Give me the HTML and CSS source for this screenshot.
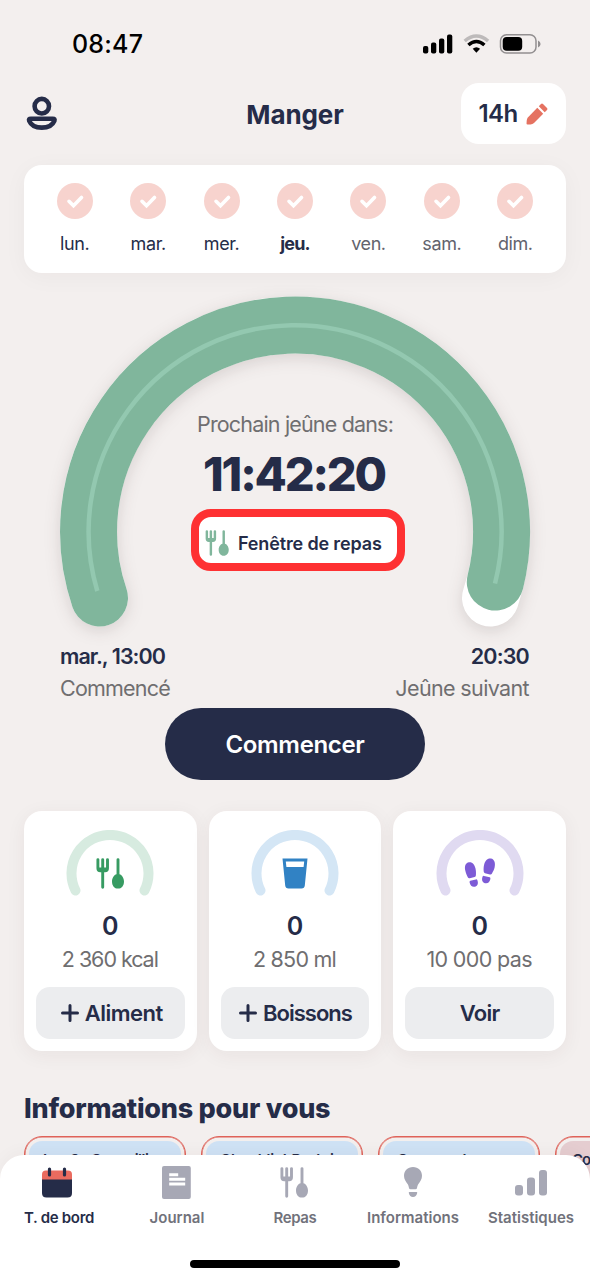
FILE: index.html
```
<!DOCTYPE html>
<html lang="fr">
<head>
<meta charset="utf-8">
<title>Manger</title>
<link rel="stylesheet" href="styles.css">
</head>
<body>
<svg class="defs" width="0" height="0" aria-hidden="true">
  <symbol id="cutlery" viewBox="0 0 28 31">
    <path d="M1.900 1.600v8.600q0 2.600 2.400 2.600h4.800q2.400 0 2.400-2.600V1.600M6.700 1.600v27.600M22 1.600v18" fill="none" stroke="currentColor" stroke-width="2.900" stroke-linecap="round" stroke-linejoin="round"/>
    <path d="M1.900 9.500h9.600v1.500q0 2-2 2H3.900q-2 0-2-2z" fill="currentColor"/>
    <path d="M22 16c3.400 0 6 3.600 6 7.400 0 4.200-2.400 7.200-6 7.200s-6-3-6-7.200c0-3.800 2.600-7.400 6-7.400z" fill="currentColor"/>
  </symbol>
  <symbol id="check" viewBox="0 0 36 36">
    <circle cx="18" cy="18" r="18" fill="#f7d3ce"/>
    <path d="M12 18.300l4.500 4.500 8-8.300" fill="none" stroke="#fff" stroke-width="3.600" stroke-linecap="round"/>
  </symbol>
  <symbol id="gauge" viewBox="0 0 88 66">
    <path d="M9.500 60.500A38.500 38.500 0 1 1 78.500 60.500" fill="none" stroke="currentColor" stroke-width="10" stroke-linecap="round"/>
  </symbol>
  <symbol id="plus" viewBox="0 0 18 18">
    <path d="M9 1.500v15M1.500 9h15" stroke="currentColor" stroke-width="3" stroke-linecap="round"/>
  </symbol>
</svg>

<div class="screen">
  <div class="status">
    <span class="clock">08:47</span>
    <svg class="status-icons" width="120" height="22" viewBox="0 0 120 22">
      <rect x="1" y="13" width="5.300" height="7.500" rx="1.900"/>
      <rect x="9" y="9.500" width="5.300" height="11" rx="1.900"/>
      <rect x="17" y="5.500" width="5.300" height="15" rx="1.900"/>
      <rect x="25" y="1.500" width="5.300" height="19" rx="1.900"/>
      <g fill="none" stroke-width="3.500">
        <path d="M42.700 8q11.700-10 23.400 0" stroke="#bdbaba"/>
        <path d="M46.400 12q8-7 16 0" stroke="#000"/>
      </g>
      <path d="M50.700 15.700q3.700-3 7.400 0l-3.700 4z"/>
      <rect x="78.500" y="1.700" width="35.500" height="18.300" rx="6" fill="none" stroke="#928f90" stroke-width="1.500"/>
      <rect x="80.700" y="4" width="19.500" height="13.700" rx="4"/>
      <path d="M116 7.500q2.600 1.200 2.600 3.500t-2.600 3.500z" fill="#928f90"/>
    </svg>
  </div>

  <header class="header">
    <svg class="profile" width="34" height="36" viewBox="0 0 34 36" fill="none" stroke="#252c48" stroke-width="4.600">
      <ellipse cx="16.800" cy="10.200" rx="7.200" ry="7.300"/>
      <path d="M5.800 22.800h22q2.400 0 1.600 2c-1.800 4.300-6.600 6.800-12.600 6.800S6 29.100 4.200 24.800q-.8-2 1.600-2z"/>
    </svg>
    <h1 class="title">Manger</h1>
    <div class="plan">
      <span class="plan-text">14h</span>
      <svg width="22" height="22" viewBox="0 0 22 22" fill="#e57261">
        <path d="M11.300 4.800l5.900 5.900L8 20q-1.500 1.300-3.500 1.400L1.500 21.500q-1 0-1-1l.3-3.500q.2-1.600 1.300-2.800z"/>
        <path d="M12.800 3.300L15 1.100q1-1 2 0l4 4q1 1 0 2l-2.300 2.200z"/>
      </svg>
    </div>
  </header>

  <section class="week">
    <div class="day"><svg class="check"><use href="#check"/></svg><span>lun.</span></div>
    <div class="day"><svg class="check"><use href="#check"/></svg><span>mar.</span></div>
    <div class="day"><svg class="check"><use href="#check"/></svg><span>mer.</span></div>
    <div class="day today"><svg class="check"><use href="#check"/></svg><span>jeu.</span></div>
    <div class="day next"><svg class="check"><use href="#check"/></svg><span>ven.</span></div>
    <div class="day next"><svg class="check"><use href="#check"/></svg><span>sam.</span></div>
    <div class="day next"><svg class="check"><use href="#check"/></svg><span>dim.</span></div>
  </section>

  <section class="dial">
    <svg class="ring" width="590" height="372" viewBox="0 273 590 372" fill="none">
      <g class="ring-shadow" stroke-width="57" stroke-linecap="round">
        <path d="M99.500 598A206.500 206.500 0 1 1 490.500 598" stroke="#fff"/>
      </g>
      <path d="M99.500 598A206.500 206.500 0 1 1 495.300 582" stroke="#80b69c" stroke-width="57" stroke-linecap="round"/>
      <path d="M97.300 591A206.500 206.500 0 1 1 495 583.500" stroke="#93c8b0" stroke-width="4.500"/>
    </svg>
    <div class="dial-body">
      <p class="until">Prochain jeûne dans:</p>
      <p class="timer">11:42:20</p>
      <div class="window"><svg class="window-icon"><use href="#cutlery"/></svg><span>Fenêtre de repas</span></div>
    </div>
  </section>

  <section class="times">
    <div><p class="time t-start">mar., 13:00</p><p class="time-label l-start">Commencé</p></div>
    <div class="end"><p class="time t-end">20:30</p><p class="time-label l-end">Jeûne suivant</p></div>
  </section>
  <button class="start"><span>Commencer</span></button>

  <section class="cards">
    <article class="card">
      <div class="meter green"><svg class="gauge"><use href="#gauge"/></svg><svg class="meter-icon food"><use href="#cutlery"/></svg></div>
      <p class="value">0</p><p class="goal g1">2 360 kcal</p>
      <button class="action a1"><svg class="plus"><use href="#plus"/></svg><span>Aliment</span></button>
    </article>
    <article class="card">
      <div class="meter blue"><svg class="gauge"><use href="#gauge"/></svg>
        <svg class="meter-icon glass" viewBox="0 0 26 31"><path fill-rule="evenodd" d="M.5.5h25L22.800 27.500q-.3 3-3.300 3h-13q-3 0-3.300-3zM3.800 3.500l.6 5.500h17.200l.6-5.500z" fill="#3182c4"/></svg></div>
      <p class="value">0</p><p class="goal g2">2 850 ml</p>
      <button class="action a2"><svg class="plus"><use href="#plus"/></svg><span>Boissons</span></button>
    </article>
    <article class="card">
      <div class="meter purple"><svg class="gauge"><use href="#gauge"/></svg>
        <svg class="meter-icon steps" viewBox="0 0 32 30" fill="#7d5bd6">
          <path d="M1.400 13C.2 8.500 1.500 4.800 5 4.300c3.500-.4 5.600 2.300 6.500 6.300.5 2.500.6 4.400.4 6.600q-.1 1.400-1.300 1.800l-4.800 1.200q-1.400.3-2-1C2.700 17.200 2 15.500 1.400 13z"/>
          <path d="M6.300 22.800l5.600-1.400q1-.2 1.400.7c1.300 3.200.5 5.900-2.200 6.600-2.800.7-4.800-.9-5.500-4.100q-.2-1.500.7-1.800z"/>
          <path d="M30.600 9.500c1.100-4.500-.3-8.400-3.700-9-3.500-.5-5.900 2.300-6.800 6.300-.6 2.500-.6 4.400-.4 6.700q.1 1.300 1.300 1.700l5 1.300q1.400.3 2-1c1-2 2-3.500 2.600-6z"/>
          <path d="M25.700 19.300L20 17.900q-1-.2-1.400.7c-1.200 3.200-.4 5.900 2.300 6.600 2.800.7 4.800-.9 5.500-4.100q.2-1.500-.7-1.800z"/>
        </svg></div>
      <p class="value">0</p><p class="goal g3">10 000 pas</p>
      <button class="action a3"><span>Voir</span></button>
    </article>
  </section>

  <h2 class="heading">Informations pour vous</h2>
  <section class="infos">
    <div class="info"><div class="info-inner tight">Les 3x Conseilli</div></div>
    <div class="info"><div class="info-inner">Checklist Protei</div></div>
    <div class="info"><div class="info-inner">Comment</div></div>
    <div class="info"><div class="info-inner rose">Co</div></div>
  </section>
</div>

<nav class="nav">
  <div class="tabs">
    <a class="tab active"><svg class="calendar" width="32" height="34" viewBox="0 0 32 34">
      <path d="M1 15V8.500q0-4 4-4h22q4 0 4 4V15z" fill="#ea6b5f"/><path d="M1 13.500h30V27q0 4.500-4.500 4.500h-21Q1 31.500 1 27z" fill="#252c48"/>
      <path d="M8.500 3v6M23.500 3v6" stroke="#252c48" stroke-width="3.200" stroke-linecap="round"/></svg><span class="n1">T. de bord</span></a>
    <a class="tab"><svg width="32" height="34" viewBox="0 0 32 34">
      <rect x="1" y="0" width="28.800" height="33" rx="2" fill="#a7a8b5"/><path d="M9.700 8.700h6M9.700 13.300h13M9.700 18h13" stroke="#fff" stroke-width="3" stroke-linecap="square"/></svg><span class="n2">Journal</span></a>
    <a class="tab"><svg width="30" height="34" viewBox="0 -1 30 34" color="#a7a8b5"><use href="#cutlery" width="28" height="31"/></svg><span class="n3">Repas</span></a>
    <a class="tab"><svg width="32" height="34" viewBox="0 0 32 34" fill="#a7a8b5">
      <path d="M16 1c5.300 0 9 3.800 9 8.700 0 3.500-1.900 5.800-3.600 8.300-.9 1.500-1.100 2.500-1.400 4q-.2 1.300-1.500 1.300h-5q-1.300 0-1.500-1.300c-.3-1.500-.5-2.500-1.400-4C8.900 15.500 7 13.200 7 9.700 7 4.800 10.700 1 16 1z"/><path d="M12.500 26h7q1 0 .7 1c-.6 2.500-2 4-4.200 4s-3.600-1.500-4.200-4q-.3-1 .7-1z"/></svg><span class="n4">Informations</span></a>
    <a class="tab"><svg width="34" height="34" viewBox="0 0 34 34" fill="#a7a8b5">
      <rect x="1" y="19" width="8" height="10.500" rx="3"/><rect x="13" y="11.500" width="8" height="18" rx="3"/><rect x="25" y="4" width="8" height="25.500" rx="3"/></svg><span class="n5">Statistiques</span></a>
  </div>
  <div class="home"></div>
</nav>
</body>
</html>
```
FILE: styles.css
```
* { box-sizing: border-box; }
body {
  margin: 0;
  width: 590px;
  height: 1280px;
  overflow: hidden;
  position: relative;
  background: #f3efee;
  color: #252c48;
  font-family: Inter, "Liberation Sans", sans-serif;
}
h1, h2, p { margin: 0; font-weight: inherit; }
button { border: 0; padding: 0; font: inherit; color: inherit; }
svg { display: block; flex: none; }
span, p, h1, h2 { white-space: nowrap; }
.defs { position: absolute; }
.screen { height: 1280px; overflow: hidden; }

.status { height: 83px; padding: 5px 48px 0 72px; display: flex; justify-content: space-between; align-items: center; color: #000; }
.clock { font-size: 25px; font-weight: 500; line-height: 30px; letter-spacing: .2px; }

.header { height: 61px; margin: 0 24px; display: grid; grid-template-columns: 105px 1fr 105px; align-items: center; }
.profile { margin-left: 1px; }
.title { text-align: center; font-size: 26px; font-weight: 700; line-height: 32px; padding-top: 2px; letter-spacing: -.1px; }
.plan { height: 61px; border-radius: 18px; background: #fff; display: flex; align-items: center; justify-content: center; gap: 8px; padding-right: 1px; font-size: 24px; font-weight: 600; letter-spacing: -.6px; }

.week { height: 108px; margin: 21px 24px 0; padding: 18px 14px 0; background: #fff; border-radius: 18px; box-shadow: 0 4px 24px rgba(60, 30, 30, .04); display: grid; grid-template-columns: repeat(7, 1fr); }
.day { display: flex; flex-direction: column; align-items: center; gap: 14px; font-size: 18px; line-height: 22px; letter-spacing: -.4px; }
.check { width: 36px; height: 36px; }
.today { font-weight: 700; letter-spacing: -.8px; }
.next { color: #62636d; }

.dial { height: 372px; display: grid; }
.dial > * { grid-area: 1 / 1; }
.ring { overflow: visible; }
.ring-shadow { filter: drop-shadow(0 4px 8px rgba(50, 30, 30, .14)); }
.dial-body { display: flex; flex-direction: column; align-items: center; padding-top: 137px; }
.until { font-size: 21.500px; line-height: 28px; color: #6f6e70; letter-spacing: -.83px; }
.timer { font-size: 47px; font-weight: 800; line-height: 56px; margin: 8px 2px 0 0; letter-spacing: -2.200px; }
.window { width: 214px; height: 62px; margin: 7px 0 0 6px; border: 8px solid #fe3132; border-radius: 20px; background: #fff; display: flex; align-items: center; padding: 6px 0 0 6px; gap: 9px; font-size: 18px; font-weight: 600; letter-spacing: -.15px; }
.window-icon { width: 24px; height: 26px; color: #80b69c; }

.times { display: flex; justify-content: space-between; padding: 0 61px 0 60px; height: 63px; line-height: 32px; font-size: 21.500px; margin-top: -5px; }
.time { font-weight: 600; letter-spacing: -.97px; }
.t-end { letter-spacing: -.8px; }
.time-label { color: #6f6e70; letter-spacing: -.8px; }
.l-end { letter-spacing: -.63px; }
.end { text-align: right; }
.start { display: block; width: 260px; height: 72px; margin: 5px auto 0; border-radius: 36px; background: #252c48; color: #fff; font-size: 24px; font-weight: 600; letter-spacing: -.35px; }

.cards { display: grid; grid-template-columns: repeat(3, 1fr); gap: 12px; margin: 31px 24px 0; }
.card { height: 240px; padding: 19px 12px 12px; background: #fff; border-radius: 18px; box-shadow: 0 4px 20px rgba(60, 30, 30, .06); display: flex; flex-direction: column; align-items: center; }
.meter { display: grid; justify-items: center; }
.meter > * { grid-area: 1 / 1; }
.gauge { width: 88px; height: 66px; }
.green .gauge { color: #d7ebe0; }
.blue .gauge { color: #d4e6f5; }
.purple .gauge { color: #e0daf1; }
.meter-icon { height: 31px; margin-top: 28px; }
.food { width: 28px; color: #379b62; }
.glass { width: 26px; }
.steps { width: 32px; height: 30px; margin-top: 28px; }
.value { font-size: 25px; font-weight: 600; line-height: 30px; margin-top: 15px; }
.goal { font-size: 21.500px; line-height: 30px; margin: 3px 1px 0 0; color: #6f6e70; }
.g1 { letter-spacing: -1.050px; }
.g2 { letter-spacing: -.75px; }
.g3 { letter-spacing: -.65px; }
.action { width: 100%; height: 52px; margin-top: auto; border-radius: 14px; background: #ecedef; display: flex; align-items: center; justify-content: center; gap: 6px; font-size: 22px; font-weight: 600; }
.a1 { padding-left: 3px; letter-spacing: -.5px; }
.a2 { padding-left: 1px; letter-spacing: -1px; }
.a3 { letter-spacing: -.7px; }
.plus { width: 18px; height: 18px; }

.heading { margin: 41px 24px 0; font-size: 27px; font-weight: 800; line-height: 34px; letter-spacing: -.24px; }
.infos { display: grid; grid-template-columns: repeat(4, 162px); gap: 15px; margin: 10px 0 0 24px; }
.info { height: 120px; padding: 4px; border: 1px solid #df6259; box-shadow: inset 0 0 0 .5px #df6259; border-radius: 18px; }
.info-inner { height: 110px; padding: 9px 0 0 14px; border-radius: 13px; background: #cfe2f5; font-size: 15px; font-weight: 600; white-space: nowrap; }
.tight { letter-spacing: -.5px; }
.rose { background: #e5cdd0; letter-spacing: -1px; padding-left: 12px; }

.nav { position: absolute; left: 0; right: 0; bottom: 0; height: 125px; background: #fff; border-radius: 24px 24px 0 0; box-shadow: 0 -4px 16px rgba(60, 30, 30, .03); display: flex; flex-direction: column; align-items: center; justify-content: space-between; padding: 11px 0 12px; }
.tabs { display: grid; grid-template-columns: repeat(5, 118px); }
.tab { display: flex; flex-direction: column; align-items: center; gap: 8px; font-size: 15px; line-height: 20px; font-weight: 600; color: #71727b; }
.active { color: #252c48; }
.calendar { margin-right: 4px; }
.n1 { letter-spacing: -.3px; }
.n3 { letter-spacing: -.4px; }
.home { width: 210px; height: 8px; border-radius: 4px; background: #000; }
```
